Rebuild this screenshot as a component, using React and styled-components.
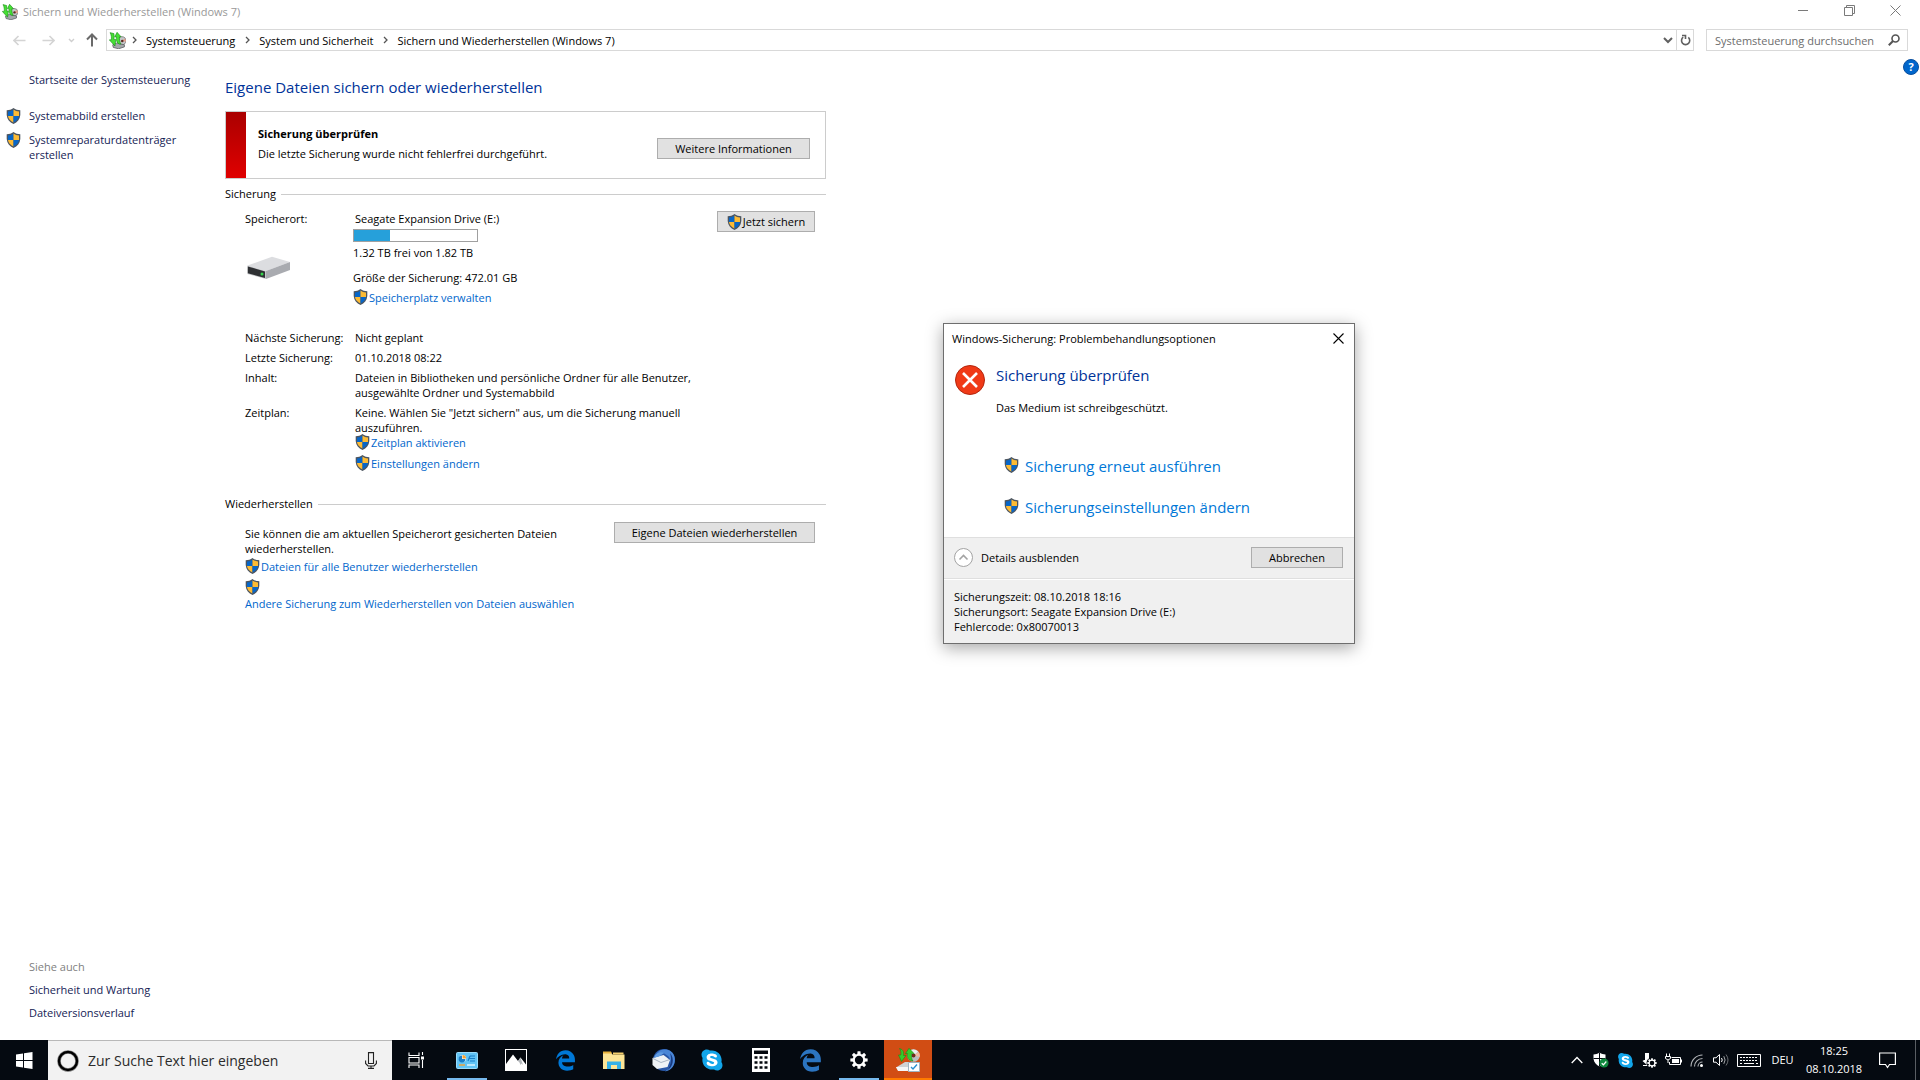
import { useState } from "react";
import styled, { createGlobalStyle } from "styled-components";
import { FaEdgeLegacy, FaSkype } from "react-icons/fa";

export default function App() {
    return (
        <>
            <GlobalStyle />
            <Screen>
                <TitleBar />
                <AddressBar />
                <Body>
                    <Sidebar />
                    <Main />
                    <HelpButton aria-label="Hilfe">?</HelpButton>
                </Body>
                <Taskbar />
                <ErrorDialog />
            </Screen>
        </>
    );
}

function TitleBar() {
    return (
        <TitleRow>
            <BackupIcon size={16} />
            <h1>Sichern und Wiederherstellen (Windows 7)</h1>
            <WindowButton aria-label="Minimieren">
                <svg width="11" height="11" stroke="#7a7a7a">
                    <path d="M0 5.5H10" />
                </svg>
            </WindowButton>
            <WindowButton aria-label="Verkleinern">
                <svg width="11" height="11" fill="none" stroke="#7a7a7a">
                    <path d="M0.5 2.5H8.5V10.5H0.5ZM2.5 2.5V0.5H10.5V8.5H8.5" />
                </svg>
            </WindowButton>
            <WindowButton aria-label="Schließen">
                <svg width="11" height="11" stroke="#7a7a7a">
                    <path d="M0.5 0.5L10.5 10.5M10.5 0.5L0.5 10.5" />
                </svg>
            </WindowButton>
        </TitleRow>
    );
}

function AddressBar() {
    const crumbs = ["Systemsteuerung", "System und Sicherheit", "Sichern und Wiederherstellen (Windows 7)"];

    return (
        <AddressRow>
            <NavButton aria-label="Zurück" $width={26}>
                <svg width="13" height="11" fill="none" stroke="#d4d4d4" strokeWidth="1.6">
                    <path d="M1 5.5H12.5M5.5 1L1 5.5L5.5 10" />
                </svg>
            </NavButton>
            <NavButton aria-label="Vorwärts" $width={32}>
                <svg width="13" height="11" fill="none" stroke="#d4d4d4" strokeWidth="1.6">
                    <path d="M0.5 5.5H12M7.5 1L12 5.5L7.5 10" />
                </svg>
            </NavButton>
            <NavButton aria-label="Verlauf" $width={14}>
                <svg width="7" height="5" fill="none" stroke="#cfcfcf" strokeWidth="1.4">
                    <path d="M1 1L3.5 3.5L6 1" />
                </svg>
            </NavButton>
            <NavButton aria-label="Nach oben" $width={28}>
                <svg width="12" height="14" fill="none" stroke="#6a6a6a" strokeWidth="2">
                    <path d="M6 13.5V2M1 6.5L6 1.5L11 6.5" />
                </svg>
            </NavButton>
            <PathBox>
                <BackupIcon size={17} />
                {crumbs.map((crumb) => (
                    <Crumb key={crumb}>
                        <svg width="5" height="8" fill="none" stroke="#555" strokeWidth="1.3">
                            <path d="M1 1L4 4L1 7" />
                        </svg>
                        <a href="#">{crumb}</a>
                    </Crumb>
                ))}
                <PathTools>
                    <button aria-label="Vorherige Orte">
                        <svg width="10" height="7" fill="none" stroke="#606060" strokeWidth="2">
                            <path d="M1 1L5 5L9 1" />
                        </svg>
                    </button>
                    <button aria-label="Aktualisieren">
                        <svg width="11" height="12" fill="none" stroke="#606060" strokeWidth="1.6">
                            <path d="M8.3 3.4A4.1 4.1 0 1 1 3.2 3.2" />
                            <path d="M2 1.5H5.5V5" />
                        </svg>
                    </button>
                </PathTools>
            </PathBox>
            <SearchBox>
                <input type="search" aria-label="Suchen" placeholder="Systemsteuerung durchsuchen" />
                <svg width="12" height="12" fill="none" stroke="#555" strokeWidth="1.6">
                    <circle cx="7.5" cy="4.5" r="3.5" />
                    <path d="M5 7L0.8 11.2" strokeWidth="2" />
                </svg>
            </SearchBox>
        </AddressRow>
    );
}

function Sidebar() {
    return (
        <SideColumn>
            <SideLink href="#">Startseite der Systemsteuerung</SideLink>
            <SideTasks>
                <li>
                    <Shield />
                    <a href="#">Systemabbild erstellen</a>
                </li>
                <li>
                    <Shield />
                    <a href="#">
                        Systemreparaturdatenträger
                        <br />
                        erstellen
                    </a>
                </li>
            </SideTasks>
            <SeeAlso>
                <h3>Siehe auch</h3>
                <a href="#">Sicherheit und Wartung</a>
                <a href="#">Dateiversionsverlauf</a>
            </SeeAlso>
        </SideColumn>
    );
}

function Main() {
    return (
        <Content>
            <PageTitle>Eigene Dateien sichern oder wiederherstellen</PageTitle>

            <Alert>
                <div>
                    <h3>Sicherung überprüfen</h3>
                    <p>Die letzte Sicherung wurde nicht fehlerfrei durchgeführt.</p>
                </div>
                <Button $width={153}>Weitere Informationen</Button>
            </Alert>

            <SectionTitle>Sicherung</SectionTitle>
            <Storage>
                <StorageLabel>
                    <p>Speicherort:</p>
                    <DriveIcon />
                </StorageLabel>
                <StorageInfo>
                    <DriveName>Seagate Expansion Drive (E:)</DriveName>
                    <UsageBar>
                        <div style={{ width: "29%" }} />
                    </UsageBar>
                    <p>1.32 TB frei von 1.82 TB</p>
                    <BackupSize>Größe der Sicherung: 472.01 GB</BackupSize>
                    <TaskLink href="#">
                        <Shield />
                        Speicherplatz verwalten
                    </TaskLink>
                </StorageInfo>
                <Button $width={98}>
                    <Shield />
                    Jetzt sichern
                </Button>
            </Storage>

            <Details>
                <dt>Nächste Sicherung:</dt>
                <dd>Nicht geplant</dd>
                <dt>Letzte Sicherung:</dt>
                <dd>01.10.2018 08:22</dd>
                <dt>Inhalt:</dt>
                <dd>Dateien in Bibliotheken und persönliche Ordner für alle Benutzer, ausgewählte Ordner und Systemabbild</dd>
                <dt>Zeitplan:</dt>
                <dd>
                    Keine. Wählen Sie "Jetzt sichern" aus, um die Sicherung manuell auszuführen.
                    <LinkStack>
                        <TaskLink href="#">
                            <Shield />
                            Zeitplan aktivieren
                        </TaskLink>
                        <TaskLink href="#">
                            <Shield />
                            Einstellungen ändern
                        </TaskLink>
                    </LinkStack>
                </dd>
            </Details>

            <SectionTitle>Wiederherstellen</SectionTitle>
            <Restore>
                <div>
                    <p>Sie können die am aktuellen Speicherort gesicherten Dateien wiederherstellen.</p>
                    <LinkStack>
                        <TaskLink href="#">
                            <Shield />
                            Dateien für alle Benutzer wiederherstellen
                        </TaskLink>
                        <WrappedLink href="#">
                            <Shield />
                            Andere Sicherung zum Wiederherstellen von Dateien auswählen
                        </WrappedLink>
                    </LinkStack>
                </div>
                <Button $width={201}>Eigene Dateien wiederherstellen</Button>
            </Restore>
        </Content>
    );
}

function ErrorDialog() {
    const [open, setOpen] = useState(true);
    const [details, setDetails] = useState(true);

    if (!open) return null;

    return (
        <Dialog role="dialog" aria-labelledby="dialog-title">
            <DialogTitle>
                <h2 id="dialog-title">Windows-Sicherung: Problembehandlungsoptionen</h2>
                <button aria-label="Schließen" onClick={() => setOpen(false)}>
                    <svg width="11" height="11" stroke="#000" strokeWidth="1.1">
                        <path d="M0.5 0.5L10.5 10.5M10.5 0.5L0.5 10.5" />
                    </svg>
                </button>
            </DialogTitle>
            <DialogBody>
                <svg width="30" height="30">
                    <circle cx="15" cy="15" r="14.5" fill="#f03a17" stroke="#b3260e" />
                    <path d="M8 8L22 22M22 8L8 22" stroke="#fff" strokeWidth="2.6" />
                </svg>
                <div>
                    <h3>Sicherung überprüfen</h3>
                    <p>Das Medium ist schreibgeschützt.</p>
                    <Commands>
                        <a href="#">
                            <Shield />
                            Sicherung erneut ausführen
                        </a>
                        <a href="#">
                            <Shield />
                            Sicherungseinstellungen ändern
                        </a>
                    </Commands>
                </div>
            </DialogBody>
            <DialogFooter>
                <DetailsToggle onClick={() => setDetails(!details)}>
                    <svg width="19" height="19" fill="none" stroke="#a3a3a3">
                        <circle cx="9.5" cy="9.5" r="9" fill="#fff" />
                        <path d="M5.5 11.5L9.5 7.5L13.5 11.5" strokeWidth="1.6" />
                    </svg>
                    Details ausblenden
                </DetailsToggle>
                <Button $width={92} onClick={() => setOpen(false)}>Abbrechen</Button>
            </DialogFooter>
            {details ? (
                <DialogDetails>
                    <p>Sicherungszeit: 08.10.2018 18:16</p>
                    <p>Sicherungsort: Seagate Expansion Drive (E:)</p>
                    <p>Fehlercode: 0x80070013</p>
                </DialogDetails>
            ) : null}
        </Dialog>
    );
}

function Taskbar() {
    return (
        <Bar>
            <AppButton aria-label="Start">
                <svg width="17" height="17" fill="#fff">
                    <path d="M0 2.4L7 1.4V8H0ZM8 1.2L16.5 0V8H8ZM0 9H7V15.6L0 14.6ZM8 9H16.5V17L8 15.8Z" />
                </svg>
            </AppButton>
            <Cortana>
                <svg width="22" height="22" fill="none">
                    <circle cx="11" cy="11" r="9" stroke="#8a8a8a" strokeWidth="3.6" />
                    <circle cx="11" cy="11" r="9" stroke="#000" strokeWidth="2.4" />
                </svg>
                <input type="text" aria-label="Suche" placeholder="Zur Suche Text hier eingeben" />
                <svg width="12" height="17" fill="none" stroke="#222" strokeWidth="1.1">
                    <path d="M3.5 0.6H8.5V11.5H3.5Z" />
                    <path d="M0.6 8.5V11.5L3 14H9L11.4 11.5V8.5M6 14V16.4M3 16.4H9" />
                </svg>
            </Cortana>
            <AppButton aria-label="Aktive Anwendungen">
                <svg width="17" height="17" fill="none" stroke="#fff" strokeWidth="1.1">
                    <path d="M1 0.5V3.5H11V0.5M1 16V13H11V16M1 5.5H11V11H1ZM14.5 0V3M14.5 8V16" />
                    <path d="M13 4.5H16V7.5H13Z" fill="#fff" stroke="none" />
                </svg>
            </AppButton>
            <Apps>
                <AppButton $running aria-label="Systemsteuerung">
                    <svg width="22" height="17">
                        <rect x="0.5" y="0.5" width="21" height="16" rx="1" fill="#62c4f5" stroke="#9bdcfb" />
                        <circle cx="6.5" cy="6.5" r="3.6" fill="#fff" />
                        <path d="M6.5 6.5V2.9A3.6 3.6 0 0 1 10.1 6.5Z" fill="#f7a233" />
                        <path d="M6 7V3.6A3.4 3.4 0 1 0 9.4 7Z" fill="#1b7fc9" />
                        <path d="M14 4H19M13 6.5H19M14 9H19M12 9L14 4" stroke="#1b7fc9" strokeWidth="1.2" fill="none" />
                        <path d="M3 13H9" stroke="#f7a233" strokeWidth="1.4" />
                        <path d="M11 13H19" stroke="#e6f6fe" strokeWidth="1.4" />
                    </svg>
                </AppButton>
                <AppButton aria-label="Fotos">
                    <svg width="22" height="22">
                        <rect x="0.5" y="0.5" width="21" height="21" fill="#04080e" stroke="#fff" />
                        <path d="M1 15L8 5.5L13 12L15.5 8.5L21 15.5V21H1Z" fill="#fff" />
                        <path d="M13 12L15.5 8.5L18 16L16.5 14.5L15.5 16L14.5 13.5Z" fill="#b4b8bc" />
                    </svg>
                </AppButton>
                <AppButton aria-label="Microsoft Edge">
                    <FaEdgeLegacy size={21} color="#0078d7" />
                </AppButton>
                <AppButton aria-label="Explorer">
                    <svg width="22" height="19">
                        <path d="M0 1.5H8L9.5 3.5H21.5V18H0Z" fill="#fde596" />
                        <path d="M0 0.5H8L9 2.5H0Z" fill="#e9b23b" />
                        <path d="M10 1.5H20.5V3.5H10Z" fill="#f5cf6d" />
                        <path d="M4 18V10.5H18V18H14V14H8V18Z" fill="#35b1e8" />
                    </svg>
                </AppButton>
                <AppButton aria-label="Thunderbird">
                    <svg width="24" height="24">
                        <circle cx="13" cy="12" r="11" fill="#2857a8" />
                        <path d="M6 5C11 -1 22 1 23.5 9C25 17 20 23 14 23.5C20 19 21 12 17 8C14 5 10 4 6 5Z" fill="#4a86d6" />
                        <path d="M19 5C24 11 22 19 16 22.5C20 17 21 11 19 5Z" fill="#193a80" />
                        <path d="M1.5 10L12.5 7L19 12L16.5 19L6 21L1.5 17Z" fill="#eef2f6" />
                        <path d="M2 10.5L10 14.5L18 11.8" stroke="#a9b5c4" fill="none" />
                        <path d="M3 10C4 5 9 3 13 5L9 8Z" fill="#5f9be2" />
                    </svg>
                </AppButton>
                <AppButton aria-label="Skype">
                    <SkypeLogo size={24} />
                </AppButton>
                <AppButton aria-label="Rechner">
                    <svg width="18" height="24">
                        <path d="M0 0H18V24H0Z" fill="#fff" />
                        <path d="M2 2.5H16V6H2Z" fill="#04080e" />
                        <path
                            d="M2.5 9.5H5.5M7.5 9.5H10.5M12.5 9.5H15.5M2.5 14.5H5.5M7.5 14.5H10.5M12.5 14.5H15.5M2.5 19.5H5.5M7.5 19.5H10.5M12.5 19.5H15.5"
                            stroke="#04080e"
                            strokeWidth="2.6"
                        />
                    </svg>
                </AppButton>
                <AppButton aria-label="Edge">
                    <FaEdgeLegacy size={23} color="#2b74c0" />
                </AppButton>
                <AppButton $running aria-label="Einstellungen">
                    <GearIcon size={18} color="#fff" />
                </AppButton>
                <AppButton $alert aria-label="Sichern und Wiederherstellen">
                    <svg width="24" height="24">
                        <circle cx="17.5" cy="7.5" r="6.3" fill="#b9bdbf" />
                        <path d="M13 3.5A6.3 6.3 0 0 1 22 3.5L17.5 7.5Z" fill="#eceeef" />
                        <path d="M17.5 7.5L22.5 4A6.3 6.3 0 0 1 23.8 9Z" fill="#f2b8a0" />
                        <circle cx="17.5" cy="7.5" r="2" fill="#6b2b1a" />
                        <path d="M0 19.5L9 14H18V22H2Z" fill="#cfd2d4" />
                        <path d="M0 19H12V23H2Z" fill="#f6f7f8" />
                        <path d="M3.5 0.5C7.5 1.5 8 4.5 7.5 7.5H10L5.5 13.5L2.5 7H4.8C5.2 4.5 5 2.5 3.5 0.5Z" fill="#35cc2b" stroke="#198c18" strokeWidth="0.6" />
                        <path d="M13 0.3L18 5.5H15.5C15.3 8.5 15.5 11 17 13C12.5 12.5 10.8 9.5 11.6 5.5H9.5Z" fill="#35cc2b" stroke="#198c18" strokeWidth="0.6" />
                        <path d="M12.5 14.5H23.5V23.5H12.5Z" fill="#fff" stroke="#9fb4c2" />
                        <path d="M15 19L17 21L21 16.5" fill="none" stroke="#2a8fd0" strokeWidth="1.4" />
                    </svg>
                </AppButton>
            </Apps>
            <Tray />
        </Bar>
    );
}

function Tray() {
    return (
        <TrayRow>
            <TrayButton aria-label="Ausgeblendete Symbole">
                <svg width="12" height="8" fill="none" stroke="#fff" strokeWidth="1.3">
                    <path d="M0.7 7L6 1.5L11.3 7" />
                </svg>
            </TrayButton>
            <TrayButton aria-label="Windows Defender">
                <svg width="16" height="16">
                    <path d="M6.5 0.5C4.5 2 2.5 2.4 0.5 2.4V7C1 10.5 3.5 13 6.5 14.5C9.5 13 12 10.5 12.5 7V2.4C10.5 2.4 8.5 2 6.5 0.5Z" fill="#fff" />
                    <path d="M6.5 0.5V14.5M0.5 6.5H12.5" stroke="#04080e" />
                    <circle cx="11" cy="11" r="4.6" fill="#10893e" />
                    <path d="M8.7 11.2L10.4 12.8L13.3 9.5" fill="none" stroke="#fff" strokeWidth="1.2" />
                </svg>
            </TrayButton>
            <TrayButton aria-label="Skype">
                <SkypeLogo size={17} />
            </TrayButton>
            <TrayButton aria-label="Geräte">
                <svg width="15" height="16" fill="#fff">
                    <path d="M3 1H7V7H9L5 13L0.5 9L2 8H3ZM1 13H6V14H1Z" />
                    <circle cx="10" cy="11" r="5.5" fill="#050a11" />
                    <GearIcon x="5" y="6" size={10} color="#fff" />
                </svg>
            </TrayButton>
            <TrayButton aria-label="Akku">
                <svg width="17" height="14" fill="none" stroke="#fff">
                    <path d="M6.5 4.5H15.5V11.5H4.5V9" />
                    <path d="M7 6H14V10H7Z" fill="#fff" stroke="none" />
                    <path d="M16.5 6.5V9.5M1.5 0.5V3M4.5 0.5V3M0.5 3.5H5.5V5.5L3 7L0.5 5.5ZM3 7V10" />
                </svg>
            </TrayButton>
            <TrayButton aria-label="WLAN">
                <svg width="14" height="13" fill="none" stroke="#b5b8bb" strokeWidth="1.1">
                    <path d="M1 12.5A11.5 11.5 0 0 1 12.5 1M4.5 12.5A8 8 0 0 1 12.5 4.5M8 12.5A4.5 4.5 0 0 1 12.5 8" />
                    <circle cx="11.5" cy="11.5" r="1.5" fill="#fff" stroke="none" />
                </svg>
            </TrayButton>
            <TrayButton aria-label="Lautstärke">
                <svg width="17" height="14" fill="none" stroke="#fff">
                    <path d="M0.5 4.8H3L6.5 1.5V12.5L3 9.2H0.5Z" />
                    <path d="M8.5 5Q10 7 8.5 9" />
                    <path d="M10.8 3.2Q13.4 7 10.8 10.8" stroke="#a5a8ab" />
                    <path d="M13 1.5Q17 7 13 12.5" stroke="#6b6e72" />
                </svg>
            </TrayButton>
            <TrayButton $width={31} aria-label="Bildschirmtastatur">
                <svg width="24" height="13" fill="none" stroke="#fff">
                    <path d="M0.5 0.5H23.5V12.5H0.5Z" />
                    <path d="M3 3.5H21M3 6.5H21" strokeDasharray="2 1" />
                    <path d="M3 9.5H5M7 9.5H17M19 9.5H21" />
                </svg>
            </TrayButton>
            <TrayButton $width={37}>DEU</TrayButton>
            <TrayButton $width={66}>
                18:25
                <br />
                08.10.2018
            </TrayButton>
            <TrayButton $width={40} aria-label="Info-Center">
                <svg width="17" height="17" fill="none" stroke="#fff" strokeWidth="1.2">
                    <path d="M0.6 1H16.4V12.5H10.5L8.5 15.5L6.5 12.5H0.6Z" />
                </svg>
            </TrayButton>
            <ShowDesktop aria-label="Desktop anzeigen" />
        </TrayRow>
    );
}

/* icons */

function Shield() {
    return (
        <ShieldSvg width="15" height="16" viewBox="0 0 15 16">
            <path d="M7.5 0C5.5 1.7 3.2 2.2 0.7 2.2V7C1 11.2 3.6 14.2 7.5 16C11.4 14.2 14 11.2 14.3 7V2.2C11.8 2.2 9.5 1.7 7.5 0Z" fill="#4c5560" />
            <path d="M7.5 1.4V8H2V3.4C4.1 3.3 6 2.6 7.5 1.4Z" fill="#0766c8" />
            <path d="M7.5 1.4V8H13V3.4C10.9 3.3 9 2.6 7.5 1.4Z" fill="#fdbb34" />
            <path d="M7.5 8V14.6C4.4 13 2.3 10.8 2 8Z" fill="#fdbb34" />
            <path d="M7.5 8V14.6C10.6 13 12.7 10.8 13 8Z" fill="#0766c8" />
        </ShieldSvg>
    );
}

function BackupIcon({ size }) {
    return (
        <svg width={size} height={size} viewBox="0 0 16 16">
            <circle cx="12" cy="8.2" r="3.8" fill="#c4c7c9" stroke="#6b6b6b" strokeWidth="0.7" />
            <path d="M12 8.2L15 6A3.8 3.8 0 0 1 15.7 9.2Z" fill="#e8a08c" />
            <circle cx="12.5" cy="8.4" r="1.2" fill="#5b2a24" />
            <path d="M3.5 12L7 10.5L14.5 12V14L9 15.8L4 14.5Z" fill="#a4a8ab" stroke="#55585b" strokeWidth="0.7" />
            <path d="M1 0.6L4.6 1.5C5 3.5 4.9 5 4.6 7H6.4L5.6 13.2L0.3 7.4H2.2C2.5 5 2.2 3 1 0.6Z" fill="#45e034" stroke="#1d8c1a" strokeWidth="0.6" />
            <path d="M7.6 0.3L11.4 4.6H9.9C9.7 7.2 10 9.2 11.2 11.4C8 11.6 6.6 8.6 7 4.6H5.4Z" fill="#45e034" stroke="#1d8c1a" strokeWidth="0.6" />
        </svg>
    );
}

function DriveIcon() {
    return (
        <svg width="46" height="24" viewBox="0 0 46 24">
            <path d="M1.5 9.5L26 0.8L44 6L20 15Z" fill="#dcdde0" />
            <path d="M20 15L44 6V14L20 23Z" fill="#a9abb0" />
            <path d="M1.5 9.5L20 15V23L1.5 18Z" fill="#c3c5c8" />
            <path d="M1.8 10.4L19 15.5V22L1.8 17.3Z" fill="#2e3033" />
            <circle cx="16" cy="18" r="1.5" fill="#33d64a" />
        </svg>
    );
}

function GearIcon({ size, color, ...rest }) {
    const teeth = [0, 45, 90, 135, 180, 225, 270, 315];
    return (
        <svg width={size} height={size} viewBox="0 0 20 20" {...rest}>
            <circle cx="10" cy="10" r="5.8" fill="none" stroke={color} strokeWidth="2.4" />
            {teeth.map((deg) => (
                <path key={deg} d="M8 4.5L8.4 0.4H11.6L12 4.5Z" fill={color} transform={`rotate(${deg} 10 10)`} />
            ))}
        </svg>
    );
}

function SkypeLogo({ size }) {
    return (
        <svg width={size} height={size} viewBox="0 0 24 24">
            <circle cx="12" cy="12" r="7.5" fill="#fff" />
            <FaSkype size={24} color="#12a5ea" />
        </svg>
    );
}

const GlobalStyle = createGlobalStyle`
    * {
        box-sizing: border-box;
    }

    body {
        margin: 0;
        background-color: #ffffff;
        color: #000000;
        font-family: "Open Sans", "Noto Sans", sans-serif;
        font-size: 11px;
        line-height: 15px;
    }

    h1, h2, h3, p, ul, dl, dd {
        margin: 0;
        padding: 0;
        font-size: inherit;
        font-weight: normal;
    }

    ul {
        list-style: none;
    }

    a {
        color: inherit;
        text-decoration: none;
    }

    a:hover {
        text-decoration: underline;
    }

    button, input {
        margin: 0;
        padding: 0;
        border: none;
        background: none;
        color: inherit;
        font: inherit;
    }

    svg {
        display: block;
        flex-shrink: 0;
    }
`;

const Screen = styled.div`
    display: flex;
    flex-direction: column;
    min-height: 100vh;
    position: relative;
`;

const TitleRow = styled.header`
    display: flex;
    align-items: center;
    height: 23px;
    padding-left: 2px;

    h1 {
        flex: 1;
        margin-left: 5px;
        color: #999999;
    }
`;

const WindowButton = styled.button`
    display: flex;
    align-items: center;
    justify-content: center;
    width: 46px;
    height: 20px;
    align-self: flex-start;

    &:last-child {
        margin-right: 2px;
    }
`;

const AddressRow = styled.nav`
    display: flex;
    align-items: center;
    height: 22px;
    margin-top: 6px;
    padding: 0 12px 0 6px;
`;

const NavButton = styled.button`
    display: flex;
    align-items: center;
    justify-content: center;
    width: ${(p) => p.$width}px;
    height: 22px;
`;

const PathBox = styled.div`
    display: flex;
    align-items: center;
    flex: 1;
    height: 22px;
    padding-left: 2px;
    border: 1px solid #d9d9d9;
`;

const Crumb = styled.span`
    display: flex;
    align-items: center;
    gap: 9px;
    margin-left: 10px;

    &:first-of-type {
        margin-left: 6px;
    }
`;

const PathTools = styled.div`
    display: flex;
    height: 20px;
    margin-left: auto;

    button {
        display: flex;
        align-items: center;
        justify-content: center;
        width: 17px;
    }

    button:last-child {
        border-left: 1px solid #d9d9d9;
    }
`;

const SearchBox = styled.label`
    display: flex;
    align-items: center;
    width: 202px;
    height: 22px;
    margin-left: 12px;
    padding: 0 7px 0 8px;
    border: 1px solid #d9d9d9;

    input {
        flex: 1;
        min-width: 0;
        outline: none;
    }

    input::placeholder {
        color: #6d6d6d;
        opacity: 1;
    }
`;

const Body = styled.div`
    display: flex;
    flex: 1;
    padding-top: 1px;
`;

const HelpButton = styled.button`
    width: 16px;
    height: 16px;
    margin: 7px 1px 0 auto;
    border: 1px solid #0a4f9e;
    border-radius: 50%;
    background-color: #0066cc;
    color: #ffffff;
    font-weight: bold;
    line-height: 14px;
`;

const SideColumn = styled.aside`
    display: flex;
    flex-direction: column;
    width: 225px;
    padding: 20px 0;
    color: #151c55;
`;

const SideLink = styled.a`
    margin-left: 29px;
`;

const SideTasks = styled.ul`
    display: flex;
    flex-direction: column;
    gap: 8px;
    margin: 21px 0 0 6px;

    li {
        display: flex;
        gap: 8px;
    }
`;

const SeeAlso = styled.div`
    display: flex;
    flex-direction: column;
    gap: 8px;
    margin: auto 0 0 29px;

    h3 {
        color: #808080;
    }
`;

const Content = styled.main`
    width: 601px;
    padding-top: 25px;
`;

const PageTitle = styled.h2`
    color: #003399;
    font-size: 15px;
    line-height: 20px;
`;

const Alert = styled.section`
    display: flex;
    justify-content: space-between;
    align-items: flex-start;
    height: 68px;
    margin: 14px 0 7px;
    border: 1px solid #cccccc;
    background: linear-gradient(#aa0000, #e00000) left / 20px 100% no-repeat;
    padding: 12px 15px 0 32px;
    line-height: 20px;

    h3 {
        font-weight: bold;
    }

    button {
        margin-top: 14px;
    }
`;

const Button = styled.button`
    display: flex;
    align-items: center;
    justify-content: center;
    gap: 1px;
    flex-shrink: 0;
    width: ${(p) => p.$width}px;
    height: 21px;
    border: 1px solid #adadad;
    background-color: #e1e1e1;
    line-height: 15px;

    &:hover {
        border-color: #0078d7;
        background-color: #e5f1fb;
    }
`;

const SectionTitle = styled.h3`
    display: flex;
    align-items: center;
    gap: 5px;

    &::after {
        content: "";
        flex: 1;
        height: 1px;
        margin-top: 1px;
        background-color: #cccccc;
    }
`;

const Storage = styled.section`
    display: flex;
    margin-top: 10px;
    padding: 0 11px 0 20px;
`;

const StorageLabel = styled.div`
    width: 108px;

    svg {
        margin: 30px 0 0 1px;
    }
`;

const StorageInfo = styled.div`
    flex: 1;
`;

const DriveName = styled.p`
    padding-left: 2px;
`;

const UsageBar = styled.div`
    width: 125px;
    height: 13px;
    margin: 3px 0;
    border: 1px solid #a0a0a0;

    div {
        height: 100%;
        background-color: #26a0da;
    }
`;

const BackupSize = styled.p`
    margin: 10px 0 4px;
`;

const TaskLink = styled.a`
    display: flex;
    align-items: center;
    width: fit-content;
    height: 16px;
    gap: 1px;
    color: #0066cc;
`;

const WrappedLink = styled.a`
    color: #0066cc;
    white-space: nowrap;

    svg {
        margin-bottom: 1px;
    }
`;

const LinkStack = styled.div`
    display: flex;
    flex-direction: column;
    gap: 5px;
`;

const Details = styled.dl`
    display: grid;
    grid-template-columns: 110px 355px;
    row-gap: 5px;
    margin: 25px 0 25px 20px;

    ${LinkStack} {
        margin-top: -1px;
    }
`;

const Restore = styled.section`
    display: flex;
    justify-content: space-between;
    align-items: flex-start;
    margin-top: 11px;
    padding: 0 11px 0 20px;

    div {
        width: 340px;
    }

    p {
        margin: 4px 0 2px;
    }
`;

const ShieldSvg = styled.svg`
    width: 15px;
    height: 16px;
`;

/* floating window */
const Dialog = styled.section`
    position: absolute;
    top: 323px;
    left: 943px;
    width: 412px;
    border: 1px solid #6e6e6e;
    background-color: #ffffff;
    box-shadow: 0 4px 16px rgba(0, 0, 0, 0.35);
`;

const DialogTitle = styled.header`
    display: flex;
    justify-content: space-between;
    height: 31px;
    padding-left: 8px;
    line-height: 29px;

    button {
        display: flex;
        align-items: center;
        justify-content: center;
        width: 31px;
        height: 29px;
    }
`;

const DialogBody = styled.div`
    display: flex;
    gap: 11px;
    padding: 10px 11px 21px;

    h3 {
        color: #003399;
        font-size: 15px;
        line-height: 20px;
    }

    p {
        margin-top: 15px;
    }
`;

const Commands = styled.div`
    display: flex;
    flex-direction: column;
    gap: 23px;
    margin: 42px 0 0 8px;

    a {
        display: flex;
        gap: 6px;
        color: #0078d7;
        font-size: 15px;
        line-height: 18px;
    }
`;

const DialogFooter = styled.div`
    display: flex;
    align-items: center;
    justify-content: space-between;
    height: 42px;
    padding: 0 11px 2px 10px;
    border: solid #dfdfdf;
    border-width: 1px 0;
    background-color: #f0f0f0;
`;

const DetailsToggle = styled.button`
    display: flex;
    align-items: center;
    gap: 8px;
`;

const DialogDetails = styled.div`
    padding: 9px 10px;
    border-top: 1px solid #ffffff;
    background-color: #f0f0f0;
`;

const Bar = styled.footer`
    display: flex;
    height: 40px;
    background-color: #050a11;
    color: #ffffff;
`;

const AppButton = styled.button`
    display: flex;
    align-items: center;
    justify-content: center;
    width: 48px;
    height: 40px;
    background: ${(p) =>
        p.$alert
            ? "linear-gradient(#ff7b00, #ff7b00) bottom / 100% 2px no-repeat #d14d14"
            : p.$running
            ? "linear-gradient(#76b9ed, #76b9ed) bottom / 40px 2px no-repeat"
            : "none"};
`;

const Cortana = styled.label`
    display: flex;
    align-items: center;
    width: 344px;
    padding: 0 15px 0 9px;
    border-top: 1px solid #b8b8b8;
    background-color: #f2f2f2;

    input {
        flex: 1;
        margin-left: 9px;
        font-size: 14px;
        line-height: 20px;
        outline: none;
    }

    input::placeholder {
        color: #2b2b2b;
        opacity: 1;
    }
`;

const Apps = styled.div`
    display: flex;
    gap: 1px;
    margin-left: 3px;
`;

const TrayRow = styled.div`
    display: flex;
    margin-left: auto;
`;

const TrayButton = styled.button`
    display: flex;
    align-items: center;
    justify-content: center;
    width: ${(p) => p.$width || 24}px;
    height: 40px;
    line-height: 18px;
`;

const ShowDesktop = styled.button`
    width: 5px;
    height: 40px;
    margin-left: 8px;
    border-left: 1px solid #5a5e63;
`;
